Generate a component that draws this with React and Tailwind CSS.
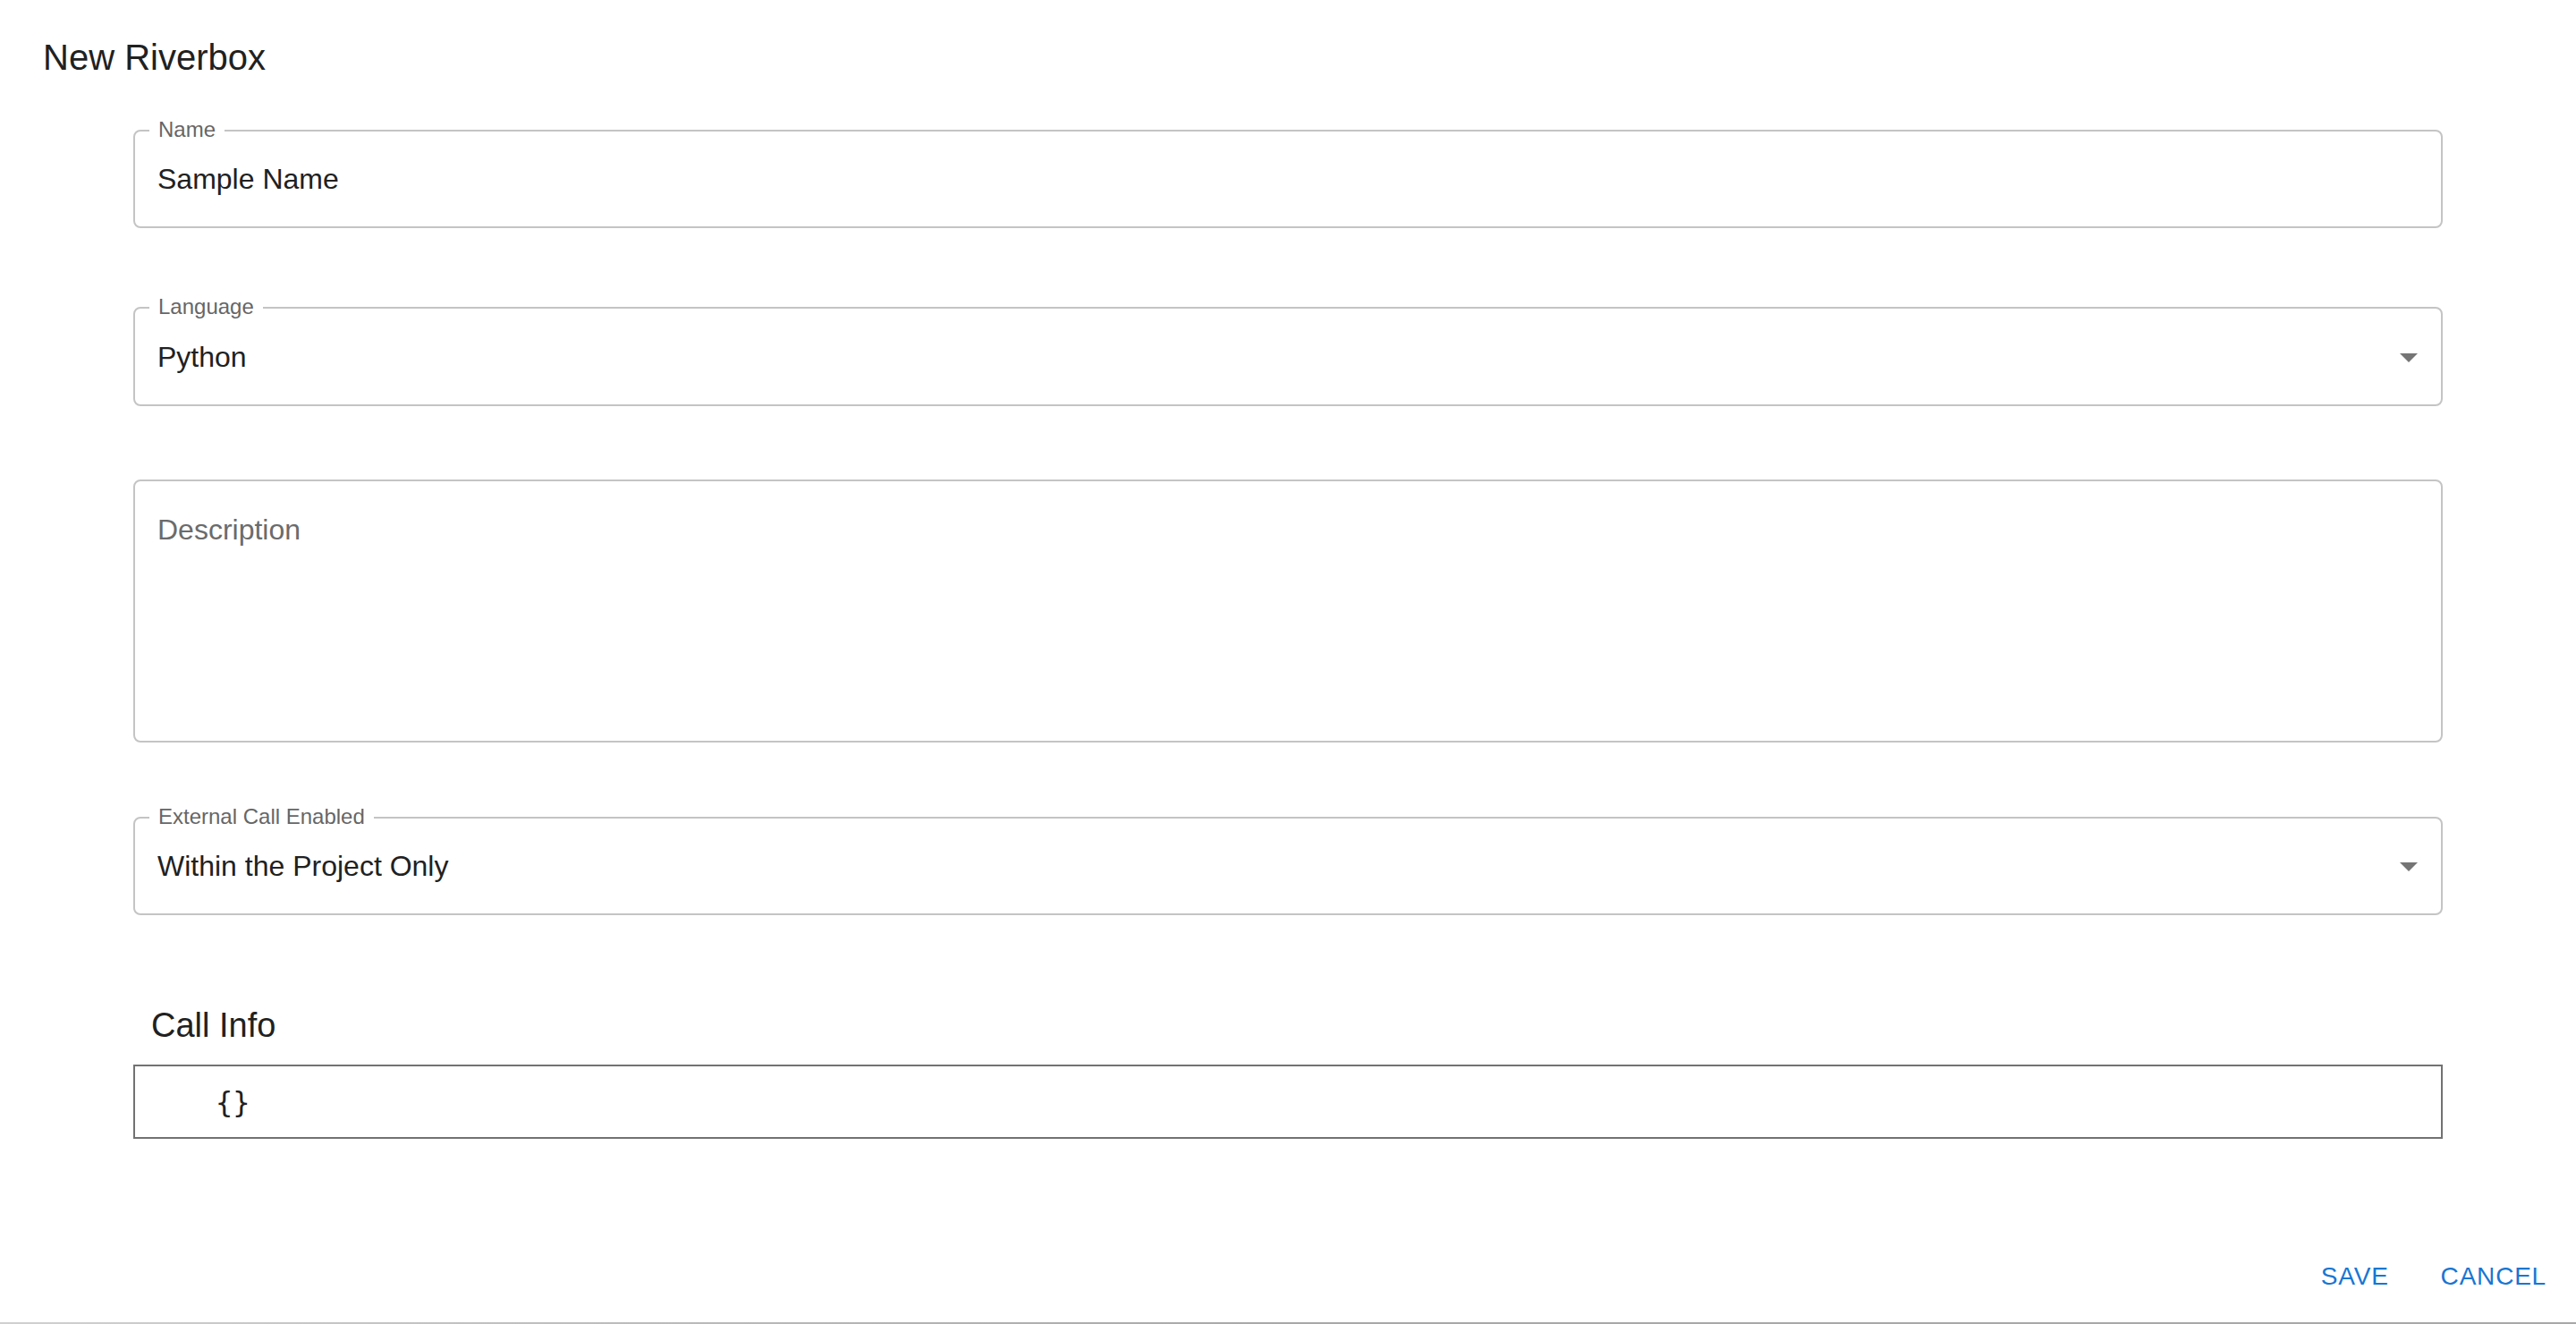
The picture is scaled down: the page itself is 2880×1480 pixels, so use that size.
import React from "react";

function Arrow() {
  return (
    <svg width="48" height="48" viewBox="0 0 24 24" className="shrink-0">
      <path d="M7 10l5 5 5-5z" fill="#757575" />
    </svg>
  );
}

function Field({ label, value, select, className }) {
  return (
    <div className={"relative border-2 border-[#c4c4c4] rounded-[8px] flex items-center pl-[25px] pr-[12px] " + className}>
      <span className="absolute left-[16px] top-[-14px] px-[10px] bg-white text-[24px] leading-[24px] text-[#666666]">{label}</span>
      <span className="flex-1 text-[32px] leading-[46px] text-[#212121]">{value}</span>
      {select && <Arrow />}
    </div>
  );
}

export default function App() {
  return (
    <div className="w-[2880px] h-[1480px] bg-white flex flex-col font-['Liberation_Sans',Arial,sans-serif]">
      <h2 className="pl-[48px] pt-[40px] text-[40px] leading-[48px] h-[88px] text-[#212121] font-normal">New Riverbox</h2>
      <div className="px-[149px] flex flex-col">
        <Field label="Name" value="Sample Name" className="mt-[57px] h-[110px]" />
        <Field label="Language" value="Python" select className="mt-[88px] h-[111px]" />
        <div className="mt-[82px] h-[294px] border-2 border-[#c4c4c4] rounded-[8px] pl-[25px] pt-[31px]">
          <span className="block text-[32px] leading-[46px] text-[#6b6b6b]">Description</span>
        </div>
        <Field label="External Call Enabled" value="Within the Project Only" select className="mt-[83px] h-[110px]" />
        <div className="mt-[99px] pl-[20px] text-[38px] leading-[48px] text-[#212121]">Call Info</div>
        <div className="mt-[20px] h-[83px] border-2 border-[#727272] flex items-center pl-[90px]">
          <span className="font-['DejaVu_Sans_Mono',monospace] text-[32px] leading-[40px] text-[#212121]">{"{}"}</span>
        </div>
      </div>
      <div className="mt-[118px] flex justify-end gap-[26px] pr-[17px]">
        <button className="h-[72px] px-[16px] text-[28px] font-normal tracking-[0.8px] text-[#1976d2] uppercase">Save</button>
        <button className="h-[72px] px-[16px] text-[28px] font-normal tracking-[0.8px] text-[#1976d2] uppercase">Cancel</button>
      </div>
      <div className="mt-auto h-[2px] bg-gradient-to-r from-[#d0d0d0] via-[#a8a8a8] to-[#a8a8a8]" />
    </div>
  );
}
